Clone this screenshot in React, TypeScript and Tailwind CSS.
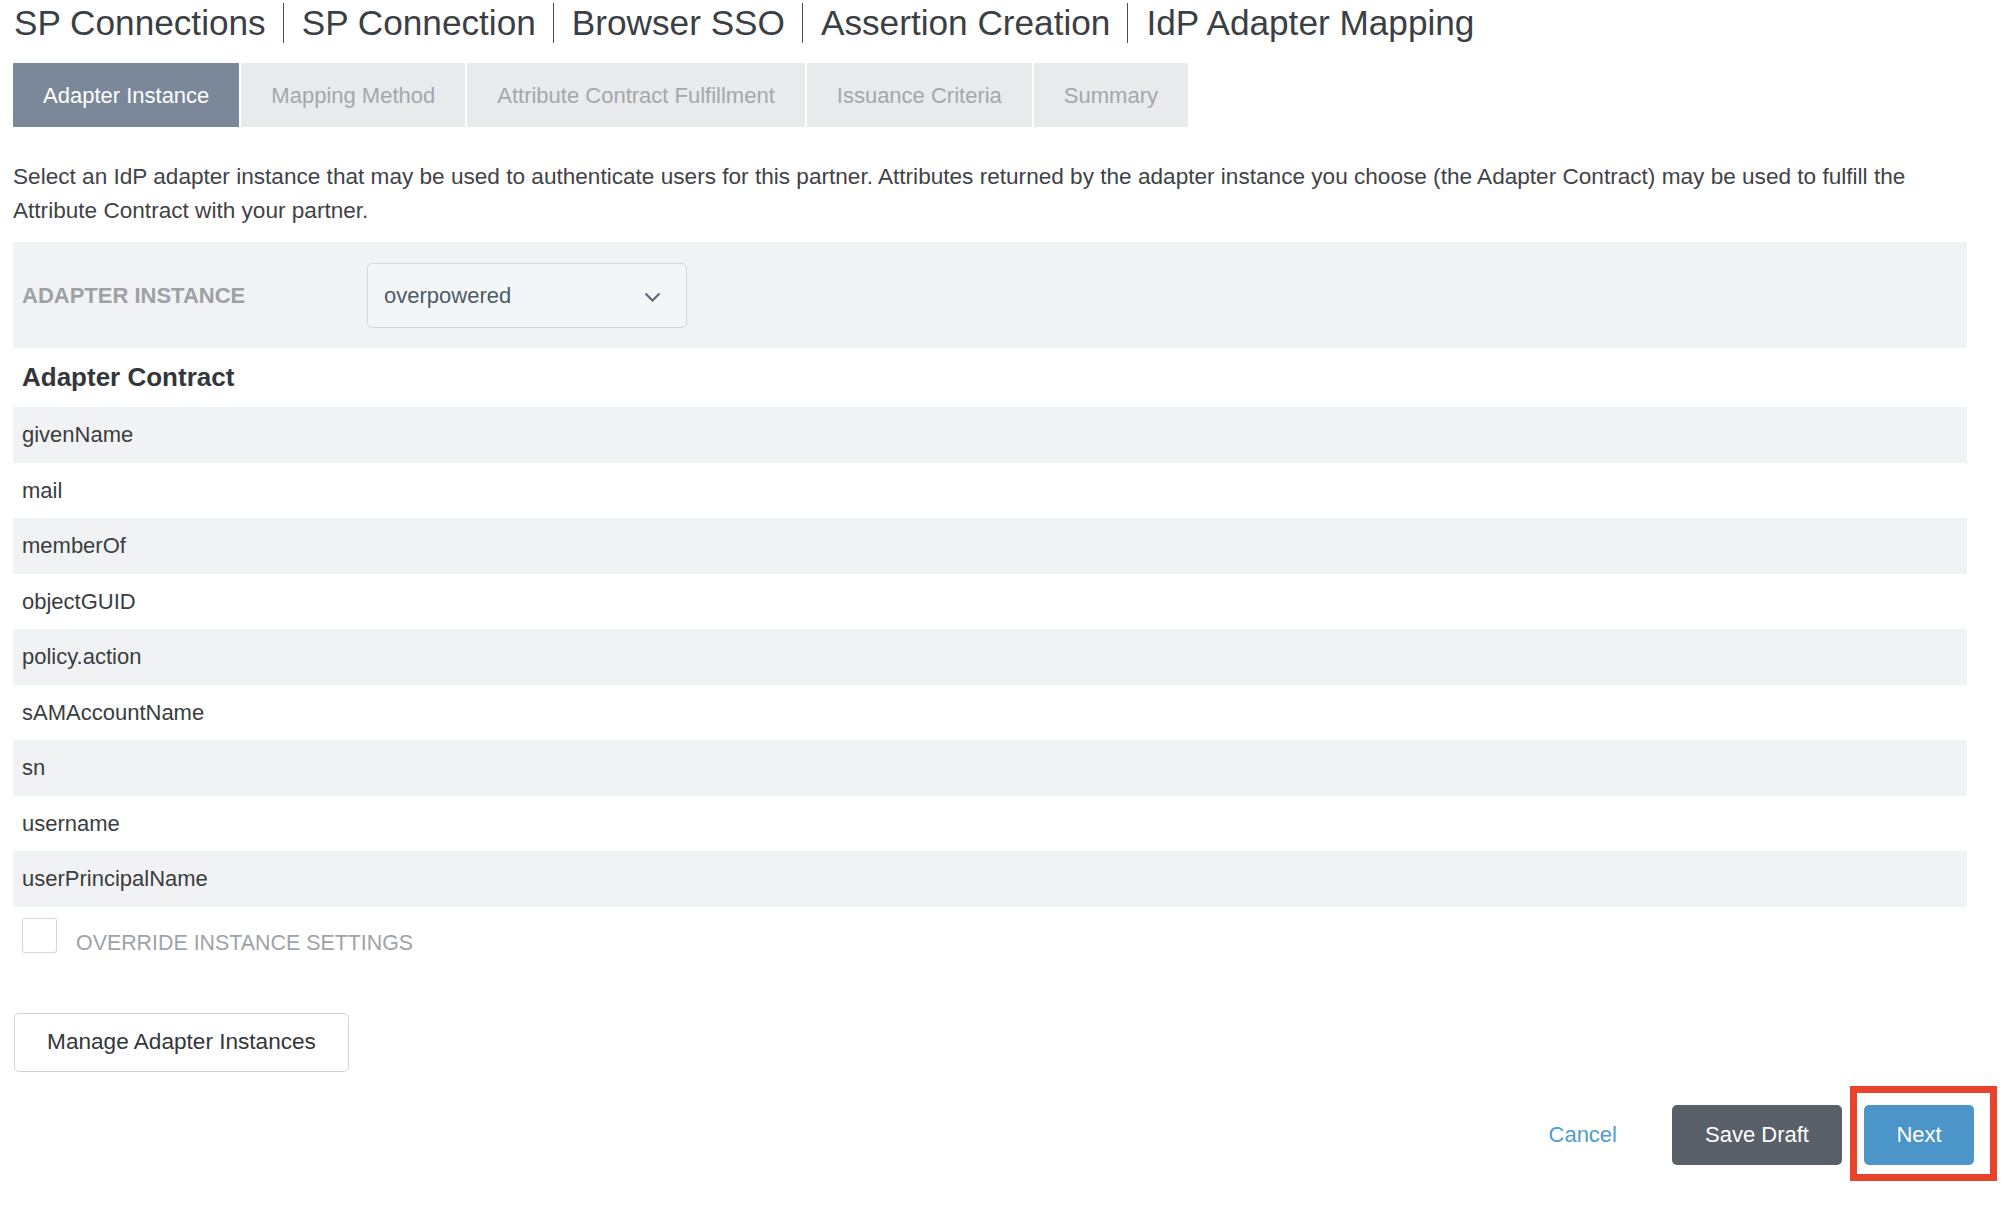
import React from "react";

const rows = [
  "givenName",
  "mail",
  "memberOf",
  "objectGUID",
  "policy.action",
  "sAMAccountName",
  "sn",
  "username",
  "userPrincipalName",
];

const crumbs = ["SP Connections", "SP Connection", "Browser SSO", "Assertion Creation", "IdP Adapter Mapping"];

const tabs = ["Adapter Instance", "Mapping Method", "Attribute Contract Fulfillment", "Issuance Criteria", "Summary"];

export default function App() {
  return (
    <div
      className="w-[2008px] h-[1206px] bg-white overflow-hidden pl-[13px] pr-[41px]"
      style={{ fontFamily: '"Liberation Sans", Arial, Helvetica, sans-serif' }}
    >
      {/* Breadcrumb title */}
      <div className="flex items-center h-[46px] text-[35.2px] text-[#3b3f45] leading-none">
        {crumbs.map((c, i) => (
          <React.Fragment key={c}>
            {i > 0 && <div className="w-px h-[40px] bg-[#4a4e54] mx-[17px]" />}
            <span className="pl-[1px]">{c}</span>
          </React.Fragment>
        ))}
      </div>

      {/* Tabs */}
      <div className="flex gap-[2px] mt-[17px] h-[64px]">
        {tabs.map((t, i) => (
          <div
            key={t}
            className={
              i === 0
                ? "flex items-center px-[30px] bg-[#7b8899] text-white text-[22px]"
                : "flex items-center px-[30px] bg-[#e9eaeb] text-[#a4a7ab] text-[22px]"
            }
          >
            {t}
          </div>
        ))}
      </div>

      {/* Description */}
      <p className="mt-[33px] text-[22.6px] leading-[34px] text-[#3f4347]">
        Select an IdP adapter instance that may be used to authenticate users for this partner. Attributes returned by the
        adapter instance you choose (the Adapter Contract) may be used to fulfill the Attribute Contract with your partner.
      </p>

      {/* Adapter instance panel */}
      <div className="mt-[14px] h-[106px] bg-[#f1f2f4] flex items-center pl-[9px]">
        <div className="w-[345px] text-[22px] font-bold text-[#9da1a6]">ADAPTER INSTANCE</div>
        <div className="relative w-[320px] h-[65px] border border-[#d4d8dc] rounded-[5px] bg-[#f2f6f7] flex items-center pl-[16px] text-[22px] text-[#4f5b6b]">
          overpowered
          <svg
            className="absolute right-[25px] top-[28px]"
            width="17"
            height="10"
            viewBox="0 0 17 10"
            fill="none"
            stroke="#5b6676"
            strokeWidth="2"
          >
            <path d="M1.5 1.5 L8.5 8.5 L15.5 1.5" />
          </svg>
        </div>
      </div>

      {/* Adapter contract */}
      <div className="h-[59px] flex items-center pl-[9px] text-[26px] font-bold text-[#33363a]">Adapter Contract</div>
      <div className="flex flex-col">
        {rows.map((r, i) => (
          <div
            key={r}
            className={
              i % 2 === 0
                ? "h-[55.5px] flex items-center pl-[9px] bg-[#f1f2f4] text-[22px] text-[#3a3d41]"
                : "h-[55.5px] flex items-center pl-[9px] bg-white text-[22px] text-[#3a3d41]"
            }
          >
            {r}
          </div>
        ))}
      </div>

      {/* Override checkbox */}
      <div className="flex items-start mt-[11px] pl-[9px]">
        <div className="w-[35px] h-[35px] border border-[#d3d6da] rounded-[3px] bg-white" />
        <div className="ml-[19px] mt-[13px] text-[21.4px] leading-[24px] text-[#9ea3a8]">OVERRIDE INSTANCE SETTINGS</div>
      </div>

      {/* Manage button */}
      <div className="mt-[58px] pl-px">
        <div className="w-[335px] h-[59px] border border-[#d0d3d7] rounded-[5px] flex items-center justify-center text-[22.6px] text-[#33363a]">
          Manage Adapter Instances
        </div>
      </div>

      {/* Footer buttons */}
      <div className="flex justify-end items-center mt-[33px] -mr-[7px]">
        <div className="text-[22px] text-[#4d9bd3] mr-[55px]">Cancel</div>
        <div className="w-[170px] h-[60px] rounded-[5px] bg-[#5a6069] text-white text-[22px] flex items-center justify-center">
          Save Draft
        </div>
        <div className="relative ml-[22px]">
          <div className="w-[110px] h-[60px] rounded-[5px] bg-[#4c95c9] text-white text-[22px] flex items-center justify-center">
            Next
          </div>
          <div className="absolute left-[-14px] right-[-23px] top-[-19px] bottom-[-16px] border-[7px] border-[#e8432b]" />
        </div>
      </div>
    </div>
  );
}
